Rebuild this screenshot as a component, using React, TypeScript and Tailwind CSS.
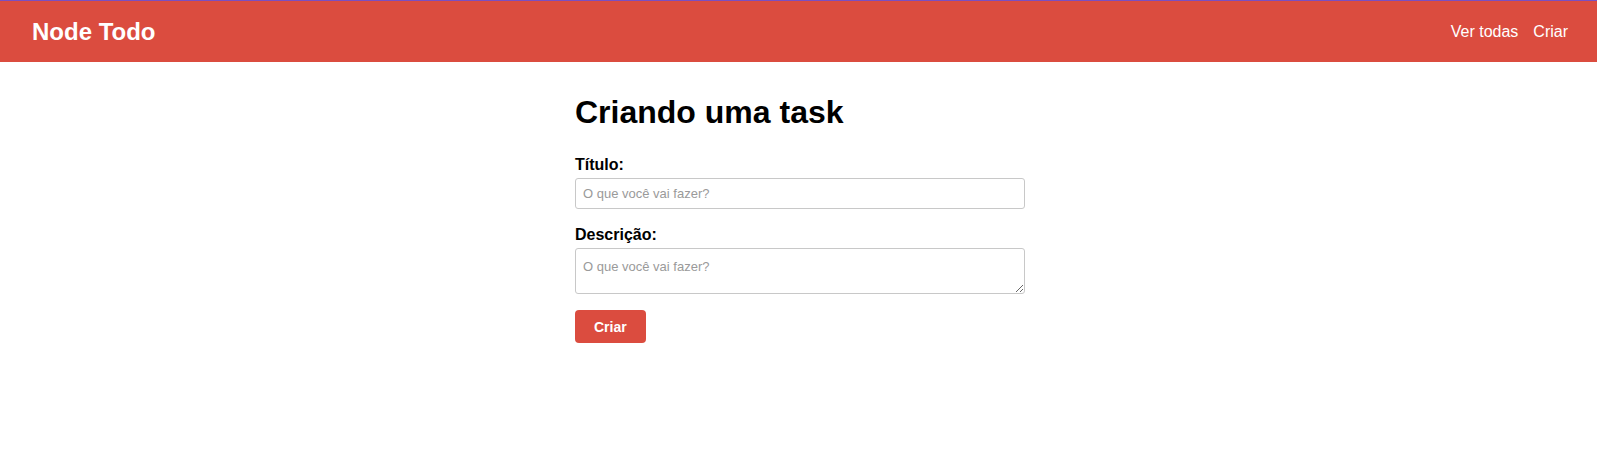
export default function App() {
  return (
    <div className="min-h-[454px] bg-white font-['Liberation_Sans',Arial,sans-serif] text-black">
      {/* Top bar */}
      <header className="flex h-[62px] items-center justify-between border-t border-[#7b4fc0] bg-[#db4c3f] pl-8 pr-[29px]">
        <a href="#" className="text-[24px] font-bold leading-[28px] text-white">
          Node Todo
        </a>
        <nav className="flex items-center gap-[15px] text-[16px] leading-[18px] text-white">
          <a href="#">Ver todas</a>
          <a href="#">Criar</a>
        </nav>
      </header>

      {/* Form */}
      <div className="flex justify-center pl-[3px]">
        <form className="flex w-[450px] flex-col" onSubmit={(e) => e.preventDefault()}>
          <h1 className="mt-8 text-[32px] font-bold leading-[37px]">Criando uma task</h1>

          <label htmlFor="title" className="mt-[25px] block text-[16px] font-bold leading-[18px]">
            Título:
          </label>
          <input
            id="title"
            type="text"
            placeholder="O que você vai fazer?"
            className="mt-1 h-[31px] w-full rounded-[3px] border border-[#c8c8c8] px-[7px] text-[13px] leading-[15px] outline-none placeholder:text-[#9a9a9a]"
          />

          <label htmlFor="description" className="mt-[17px] block text-[16px] font-bold leading-[18px]">
            Descrição:
          </label>
          <textarea
            id="description"
            rows={2}
            placeholder="O que você vai fazer?"
            className="mt-1 h-[46px] w-full rounded-[3px] border border-[#c8c8c8] px-[7px] pt-[10px] pb-1 text-[13px] leading-[15px] outline-none placeholder:text-[#9a9a9a]"
          />

          <div className="mt-4">
            <button
              type="submit"
              className="h-[33px] rounded-[4px] bg-[#db4c3f] px-[19px] text-[14px] font-bold leading-[16px] text-white"
            >
              Criar
            </button>
          </div>
        </form>
      </div>
    </div>
  );
}
